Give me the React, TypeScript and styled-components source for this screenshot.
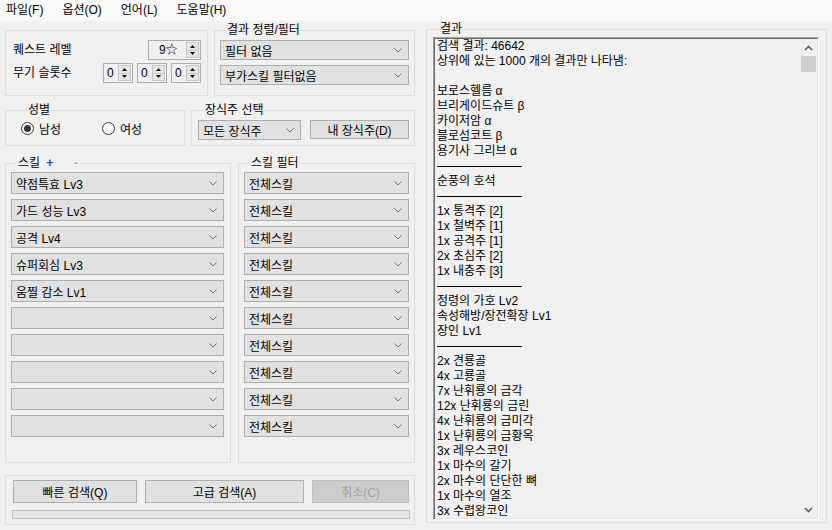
import React from "react";
import styled, { createGlobalStyle } from "styled-components";

const GlobalStyle = createGlobalStyle`
  html, body {
    margin: 0;
    padding: 0;
    background: #f0f0f0;
  }
  body {
    font-family: "Liberation Sans", "Noto Sans CJK KR", sans-serif;
    font-size: 12px;
    color: #000;
  }
  * {
    box-sizing: border-box;
  }
`;

const Window = styled.div`
  width: 832px;
  height: 530px;
  display: flex;
  flex-direction: column;
  overflow: hidden;
  background: #f0f0f0;
`;

const MenuBar = styled.div`
  height: 21px;
  flex-shrink: 0;
  display: flex;
  align-items: center;
  gap: 19px;
  padding-left: 6px;
  background: #f9f9f9;
`;

const MenuItem = styled.span`
  line-height: 21px;
  white-space: nowrap;
`;

const Main = styled.div`
  flex: 1;
  display: flex;
  gap: 11px;
  padding: 0 5px;
`;

const LeftColumn = styled.div`
  width: 410px;
  display: flex;
  flex-direction: column;
`;

const Row = styled.div<{ $top: number }>`
  display: flex;
  justify-content: space-between;
  align-items: flex-start;
  margin-top: ${(p) => p.$top}px;
`;

// winforms style group box
const Group = styled.fieldset<{
  $w: number;
  $h: number;
  $pad?: string;
  $offset?: number;
}>`
  margin: ${(p) => p.$offset ?? 0}px 0 0 0;
  padding: ${(p) => p.$pad ?? "0"};
  min-width: 0;
  width: ${(p) => p.$w}px;
  height: ${(p) => p.$h}px;
  border: 1px solid #dcdcdc;
`;

const Title = styled.legend`
  margin-left: 6px;
  padding: 0 1px;
  height: 14px;
  line-height: 14px;
  display: flex;
  align-items: center;
  white-space: nowrap;
`;

const PlusSign = styled.span`
  margin-left: 6px;
  color: #1f5ea8;
  font-weight: bold;
  font-size: 13px;
`;

const MinusSign = styled.span`
  margin-left: 20px;
  color: #86a8d6;
  font-weight: bold;
`;

const FieldRow = styled.div<{ $gap?: number }>`
  display: flex;
  align-items: center;
  justify-content: space-between;
  margin-top: ${(p) => p.$gap ?? 0}px;
`;

const Label = styled.span`
  white-space: nowrap;
  line-height: 14px;
`;

const SpinGroup = styled.div`
  display: flex;
  gap: 4px;
`;

const Spin = styled.div<{ $w: number; $pad: number }>`
  width: ${(p) => p.$w}px;
  height: 20px;
  display: flex;
  align-items: stretch;
  border: 1px solid #adadad;
  background: #f0f0f0;
  padding-left: ${(p) => p.$pad}px;
`;

const SpinValue = styled.span`
  flex: 1;
  line-height: 18px;
  white-space: nowrap;
`;

const SpinButtons = styled.div`
  width: 13px;
  margin: 1px;
  display: flex;
  flex-direction: column;
  border: 1px solid #c8c8c8;
`;

const SpinArrow = styled.div<{ $down?: boolean }>`
  flex: 1;
  display: flex;
  align-items: center;
  justify-content: center;
  background: #e6e6e6;
  border-top: ${(p) => (p.$down ? "1px solid #c8c8c8" : "none")};
`;

const Combo = styled.div<{ $w: number; $h: number }>`
  width: ${(p) => p.$w}px;
  height: ${(p) => p.$h}px;
  display: flex;
  align-items: center;
  justify-content: space-between;
  padding: 0 6px 0 4px;
  background: #e1e1e1;
  border: 1px solid #adadad;
  white-space: nowrap;
`;

const ComboStack = styled.div<{ $gap: number }>`
  display: flex;
  flex-direction: column;
  gap: ${(p) => p.$gap}px;
`;

const Button = styled.div<{ $w: number; $h: number; $disabled?: boolean }>`
  width: ${(p) => p.$w}px;
  height: ${(p) => p.$h}px;
  display: flex;
  align-items: center;
  justify-content: center;
  white-space: nowrap;
  background: ${(p) => (p.$disabled ? "#cccccc" : "#e1e1e1")};
  border: 1px solid ${(p) => (p.$disabled ? "#bfbfbf" : "#adadad")};
  color: ${(p) => (p.$disabled ? "#a0a0a0" : "#000")};
`;

const ButtonRow = styled.div`
  display: flex;
  gap: 8px;
`;

const Progress = styled.div`
  width: 398px;
  height: 9px;
  margin: 7px 0 0 -1px;
  background: #e6e6e6;
  border: 1px solid #bcbcbc;
`;

const RadioRow = styled.div`
  display: flex;
  align-items: center;
  height: 16px;
`;

const RadioOption = styled.label<{ $w: number }>`
  width: ${(p) => p.$w}px;
  display: flex;
  align-items: center;
  gap: 5px;
  white-space: nowrap;
`;

const RadioCircle = styled.span<{ $checked?: boolean }>`
  width: 13px;
  height: 13px;
  border-radius: 50%;
  border: 1px solid #333;
  background: #fff;
  display: inline-flex;
  align-items: center;
  justify-content: center;
  &::after {
    content: "";
    width: 7px;
    height: 7px;
    border-radius: 50%;
    background: ${(p) => (p.$checked ? "#333" : "transparent")};
  }
`;

const DecoRow = styled.div`
  display: flex;
  gap: 9px;
  align-items: flex-start;
`;

const ResultBox = styled.div`
  width: 386px;
  height: 483px;
  display: flex;
  border-top: 1px solid #a0a0a0;
  border-left: 1px solid #a0a0a0;
  border-right: 1px solid #fff;
  border-bottom: 1px solid #fff;
  box-shadow: inset 1px 1px 0 #696969, inset -1px -1px 0 #e3e3e3;
  padding: 1px 1px 1px 2px;
`;

const ResultText = styled.div`
  flex: 1;
  overflow: hidden;
  padding-left: 1px;
`;

const Line = styled.div`
  height: 15px;
  line-height: 15px;
  white-space: nowrap;
`;

const Separator = styled.div`
  height: 15px;
  display: flex;
  align-items: center;
  &::before {
    content: "";
    width: 85px;
    height: 1px;
    background: #000;
  }
`;

const ScrollBar = styled.div`
  width: 17px;
  display: flex;
  flex-direction: column;
  background: #f0f0f0;
`;

const ScrollArrow = styled.div`
  height: 17px;
  display: flex;
  align-items: center;
  justify-content: center;
`;

const ScrollTrack = styled.div`
  flex: 1;
  padding: 0 1px;
`;

const ScrollThumb = styled.div`
  height: 16px;
  background: #cdcdcd;
`;

const Chevron = () => (
  <svg width="8" height="5" viewBox="0 0 8 5">
    <path d="M0.5 0.5 L4 4 L7.5 0.5" fill="none" stroke="#707070" strokeWidth="1" />
  </svg>
);

const Triangle = ({ down }: { down?: boolean }) => (
  <svg width="5" height="3" viewBox="0 0 5 3">
    <path d={down ? "M0 0 L5 0 L2.5 3Z" : "M0 3 L5 3 L2.5 0Z"} fill="#111" />
  </svg>
);

const ScrollChevron = ({ down }: { down?: boolean }) => (
  <svg width="9" height="6" viewBox="0 0 9 6">
    <path
      d={down ? "M1 1 L4.5 4.5 L8 1" : "M1 5 L4.5 1.5 L8 5"}
      fill="none"
      stroke="#606060"
      strokeWidth="1.6"
    />
  </svg>
);

const SpinBox: React.FC<{ value: string; w: number; pad: number }> = ({
  value,
  w,
  pad,
}) => (
  <Spin $w={w} $pad={pad}>
    <SpinValue>{value}</SpinValue>
    <SpinButtons>
      <SpinArrow>
        <Triangle />
      </SpinArrow>
      <SpinArrow $down>
        <Triangle down />
      </SpinArrow>
    </SpinButtons>
  </Spin>
);

const ComboBox: React.FC<{ text: string; w: number; h: number }> = ({
  text,
  w,
  h,
}) => (
  <Combo $w={w} $h={h}>
    <span>{text}</span>
    <Chevron />
  </Combo>
);

const skills = [
  "약점특효 Lv3",
  "가드 성능 Lv3",
  "공격 Lv4",
  "슈퍼회심 Lv3",
  "움찔 감소 Lv1",
  "",
  "",
  "",
  "",
  "",
];

const SEP = "---";

const results = [
  "검색 결과: 46642",
  "상위에 있는 1000 개의 결과만 나타냄:",
  "",
  "보로스헬름 α",
  "브리게이드슈트 β",
  "카이저암 α",
  "블로섬코트 β",
  "용기사 그리브 α",
  SEP,
  "순풍의 호석",
  SEP,
  "1x 통격주 [2]",
  "1x 철벽주 [1]",
  "1x 공격주 [1]",
  "2x 초심주 [2]",
  "1x 내충주 [3]",
  SEP,
  "정령의 가호 Lv2",
  "속성해방/장전확장 Lv1",
  "장인 Lv1",
  SEP,
  "2x 견룡골",
  "4x 고룡골",
  "7x 난휘룡의 금각",
  "12x 난휘룡의 금린",
  "4x 난휘룡의 금미각",
  "1x 난휘룡의 금황옥",
  "3x 레우스코인",
  "1x 마수의 갈기",
  "2x 마수의 단단한 뼈",
  "1x 마수의 열조",
  "3x 수렵왕코인",
];

export default function App() {
  return (
    <Window>
      <GlobalStyle />
      <MenuBar>
        <MenuItem>파일(F)</MenuItem>
        <MenuItem>옵션(O)</MenuItem>
        <MenuItem>언어(L)</MenuItem>
        <MenuItem>도움말(H)</MenuItem>
      </MenuBar>
      <Main>
        <LeftColumn>
          <Row $top={2}>
            <Group $w={203} $h={66} $offset={7} $pad="9px 6px 0 7px">
              <FieldRow>
                <Label>퀘스트 레벨</Label>
                <SpinBox value="9☆" w={53} pad={10} />
              </FieldRow>
              <FieldRow $gap={3}>
                <Label>무기 슬롯수</Label>
                <SpinGroup>
                  <SpinBox value="0" w={30} pad={3} />
                  <SpinBox value="0" w={30} pad={3} />
                  <SpinBox value="0" w={30} pad={3} />
                </SpinGroup>
              </FieldRow>
            </Group>
            <Group $w={201} $h={73} $pad="3px 5px 0 5px">
              <Title>결과 정렬/필터</Title>
              <ComboStack $gap={5}>
                <ComboBox text="필터 없음" w={189} h={20} />
                <ComboBox text="부가스킬 필터없음" w={189} h={20} />
              </ComboStack>
            </Group>
          </Row>

          <Row $top={7}>
            <Group $w={180} $h={43} $pad="3px 0 0 15px">
              <Title>성별</Title>
              <RadioRow>
                <RadioOption $w={81}>
                  <RadioCircle $checked />
                  남성
                </RadioOption>
                <RadioOption $w={60}>
                  <RadioCircle />
                  여성
                </RadioOption>
              </RadioRow>
            </Group>
            <Group $w={224} $h={43} $pad="3px 0 0 6px">
              <Title>장식주 선택</Title>
              <DecoRow>
                <ComboBox text="모든 장식주" w={103} h={20} />
                <Button $w={99} $h={19}>
                  내 장식주(D)
                </Button>
              </DecoRow>
            </Group>
          </Row>

          <Row $top={10}>
            <Group $w={226} $h={307} $pad="2px 0 0 5px">
              <Title>
                스킬
                <PlusSign>+</PlusSign>
                <MinusSign>-</MinusSign>
              </Title>
              <ComboStack $gap={5}>
                {skills.map((s, i) => (
                  <ComboBox key={i} text={s} w={213} h={22} />
                ))}
              </ComboStack>
            </Group>
            <Group $w={177} $h={307} $pad="2px 0 0 5px">
              <Title>스킬 필터</Title>
              <ComboStack $gap={5}>
                {skills.map((_, i) => (
                  <ComboBox key={i} text="전체스킬" w={165} h={22} />
                ))}
              </ComboStack>
            </Group>
          </Row>

          <Row $top={12}>
            <Group $w={410} $h={50} $pad="4px 0 0 7px">
              <ButtonRow>
                <Button $w={124} $h={23}>
                  빠른 검색(Q)
                </Button>
                <Button $w={159} $h={23}>
                  고급 검색(A)
                </Button>
                <Button $w={97} $h={23} $disabled>
                  취소(C)
                </Button>
              </ButtonRow>
              <Progress />
            </Group>
          </Row>
        </LeftColumn>

        <Row $top={1}>
          <Group $w={401} $h={501} $pad="1px 0 0 6px">
            <Title>결과</Title>
            <ResultBox>
              <ResultText>
                {results.map((r, i) =>
                  r === SEP ? <Separator key={i} /> : <Line key={i}>{r}</Line>
                )}
              </ResultText>
              <ScrollBar>
                <ScrollArrow>
                  <ScrollChevron />
                </ScrollArrow>
                <ScrollTrack>
                  <ScrollThumb />
                </ScrollTrack>
                <ScrollArrow>
                  <ScrollChevron down />
                </ScrollArrow>
              </ScrollBar>
            </ResultBox>
          </Group>
        </Row>
      </Main>
    </Window>
  );
}
